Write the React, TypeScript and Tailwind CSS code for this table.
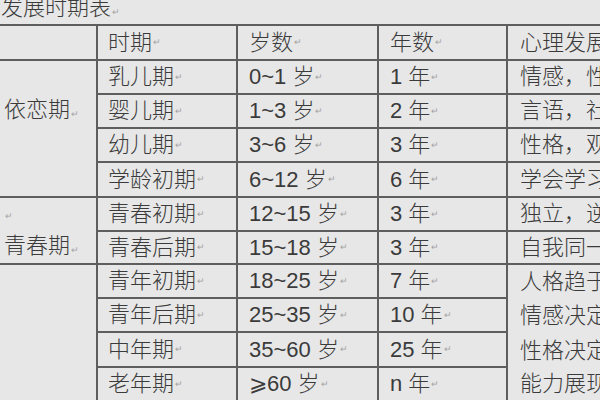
const FONT = { fontFamily: '"Liberation Sans", "Noto Sans CJK SC", "DejaVu Sans", sans-serif' }

type Row = { name: string; age: string; years: string; note: string }

// 依恋期 / 青春期 / (blank) groups — the first column spans these rows
const GROUPS: { label: string; lead?: boolean; span: string; pad: string; rows: Row[] }[] = [
  {
    label: '依恋期',
    span: 'row-span-4',
    pad: 'pt-[33px]',
    rows: [
      { name: '乳儿期', age: '0~1 岁', years: '1 年', note: '情感，性格萌芽' },
      { name: '婴儿期', age: '1~3 岁', years: '2 年', note: '言语，社会性' },
      { name: '幼儿期', age: '3~6 岁', years: '3 年', note: '性格，观察力' },
      { name: '学龄初期', age: '6~12 岁', years: '6 年', note: '学会学习' },
    ],
  },
  {
    label: '青春期',
    lead: true,
    span: 'row-span-2',
    pad: 'pt-[4px]',
    rows: [
      { name: '青春初期', age: '12~15 岁', years: '3 年', note: '独立，逆反' },
      { name: '青春后期', age: '15~18 岁', years: '3 年', note: '自我同一性' },
    ],
  },
]

const ADULT: Row[] = [
  { name: '青年初期', age: '18~25 岁', years: '7 年', note: '人格趋于成熟' },
  { name: '青年后期', age: '25~35 岁', years: '10 年', note: '情感决定成就' },
  { name: '中年期', age: '35~60 岁', years: '25 年', note: '性格决定命运' },
  { name: '老年期', age: '⩾60 岁', years: 'n 年', note: '能力展现余热' },
]

function Mark() {
  return <span className="ml-[1px] text-[9px] leading-none text-[#a3a3a3]">↵</span>
}

function Cell({ children, className = '' }: { children?: React.ReactNode; className?: string }) {
  return (
    <div className={`flex items-center overflow-hidden whitespace-nowrap bg-[#e7e7e7] ${className}`}>
      {children}
    </div>
  )
}

function RowCells({ r, withNote = true }: { r: Row; withNote?: boolean }) {
  return (
    <>
      <Cell className="pl-[10px]">
        {r.name}
        <Mark />
      </Cell>
      <Cell className="pl-[11px]">
        {r.age}
        <Mark />
      </Cell>
      <Cell className="pl-[11px]">
        {r.years}
        <Mark />
      </Cell>
      {withNote && <Cell className="pl-[12px]">{r.note}</Cell>}
    </>
  )
}

export default function App() {
  return (
    <div
      className="h-[400px] w-[600px] overflow-hidden bg-[#e7e7e7] text-[22px] font-light leading-[32px] text-[#3b3b3b]"
      style={FONT}
    >
      <div className="flex h-[24px] items-end pb-[5px] leading-[22px]">
        <span className="pl-[1px]">
          发展时期表
          <Mark />
        </span>
      </div>

      <div className="grid w-max grid-cols-[96px_138px_139px_127px_200px] grid-rows-[33px_32px_32px_32px_33px_32px_31px_32px_32px_33px_32px] gap-[2px] bg-[#5e5e5e] pt-[2px]">
        <Cell />
        <Cell className="pl-[10px]">
          时期
          <Mark />
        </Cell>
        <Cell className="pl-[11px]">
          岁数
          <Mark />
        </Cell>
        <Cell className="pl-[11px]">
          年数
          <Mark />
        </Cell>
        <Cell className="pl-[12px]">心理发展特点</Cell>

        {GROUPS.map((g) =>
          g.rows.map((r, i) => (
            <RowFragment key={r.name} first={i === 0} group={g} r={r} />
          )),
        )}

        {ADULT.map((r, i) => (
          <AdultFragment key={r.name} first={i === 0} r={r} />
        ))}
      </div>
    </div>
  )
}

function RowFragment({ first, group, r }: { first: boolean; group: (typeof GROUPS)[number]; r: Row }) {
  return (
    <>
      {first && (
        <div className={`flex flex-col items-start bg-[#e7e7e7] pl-[4px] ${group.span} ${group.pad}`}>
          {group.lead && (
            <div className="flex h-[28px] items-center">
              <Mark />
            </div>
          )}
          <div>
            {group.label}
            <Mark />
          </div>
        </div>
      )}
      <RowCells r={r} />
    </>
  )
}

function AdultFragment({ first, r }: { first: boolean; r: Row }) {
  return (
    <>
      {first && <div className="row-span-4 bg-[#e7e7e7]" />}
      <RowCells r={r} withNote={false} />
      {first && (
        <div className="row-span-4 flex flex-col bg-[#e7e7e7] pl-[12px]">
          {ADULT.map((a, i) => (
            <div
              key={a.note}
              className={`flex items-center whitespace-nowrap ${i === 2 ? 'h-[35px]' : i === 3 ? 'h-[32px]' : 'h-[34px]'}`}
            >
              {a.note}
            </div>
          ))}
        </div>
      )}
    </>
  )
}
